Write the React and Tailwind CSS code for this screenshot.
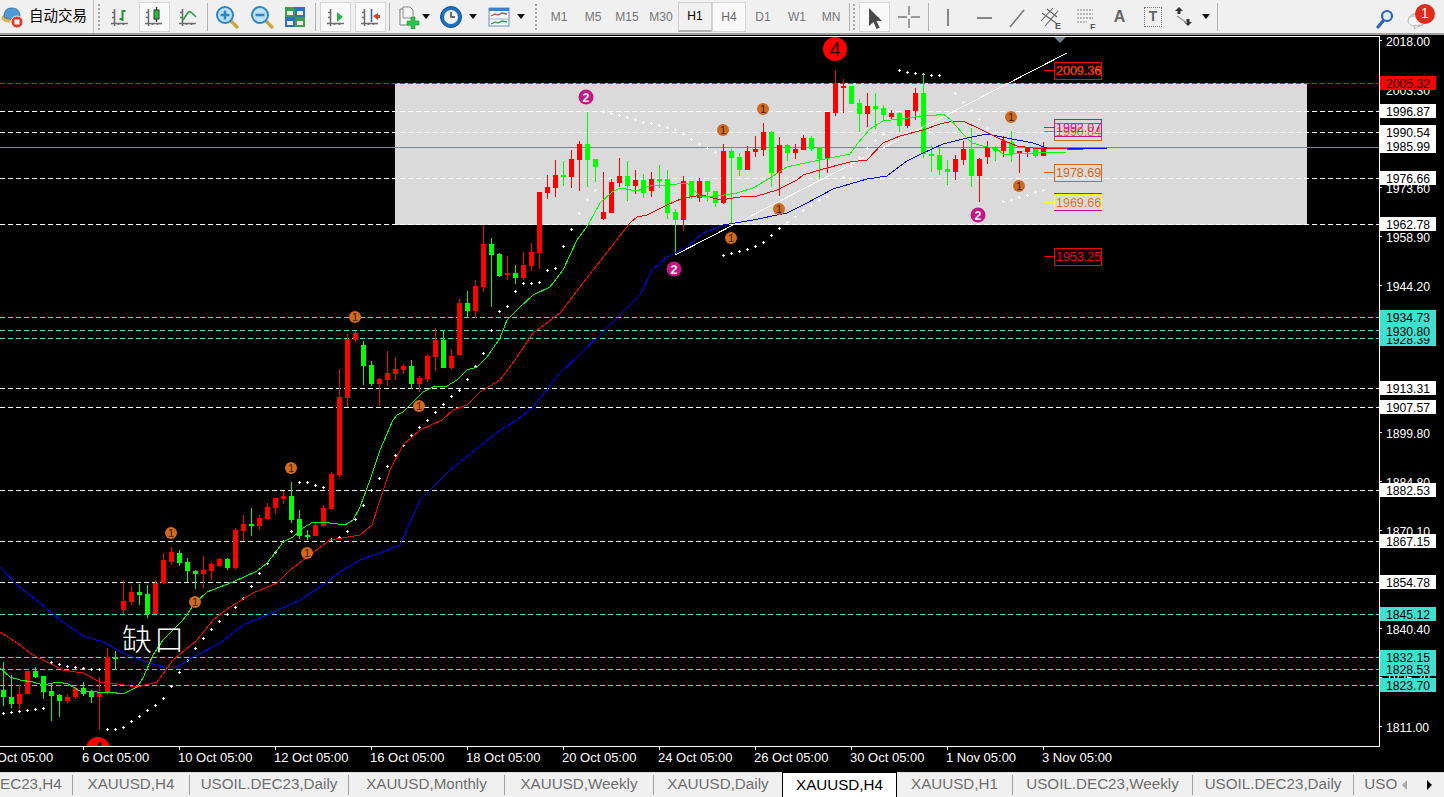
const CANDLES = [
  [662, 690, 697, 706, "g"], [675, 697, 704, 708, "g"], [685, 694, 704, 709, "r"], [671, 671, 694, 694, "r"],
  [667, 671, 677, 678, "g"], [676, 676, 692, 699, "g"], [683, 691, 696, 721, "g"], [694, 695, 701, 717, "g"],
  [694, 697, 701, 703, "r"], [687, 688, 697, 699, "r"], [682, 688, 694, 696, "g"], [690, 692, 697, 703, "g"],
  [677, 693, 697, 730, "r"], [648, 657, 693, 695, "r"], [651, 657, 659, 670, "g"], [580, 601, 610, 614, "r"],
  [586, 592, 602, 605, "r"], [584, 592, 595, 605, "g"], [585, 594, 614, 618, "g"], [580, 583, 614, 614, "r"],
  [553, 560, 583, 584, "r"], [547, 552, 562, 565, "r"], [550, 553, 563, 566, "g"], [558, 562, 571, 582, "g"],
  [570, 571, 574, 589, "g"], [556, 570, 574, 588, "r"], [562, 564, 571, 580, "r"], [558, 559, 566, 567, "r"],
  [558, 559, 568, 570, "g"], [528, 530, 568, 570, "r"], [515, 524, 531, 541, "r"], [508, 524, 526, 536, "g"],
  [515, 518, 526, 530, "r"], [503, 507, 519, 520, "r"], [498, 498, 508, 514, "r"], [491, 496, 499, 504, "r"],
  [482, 496, 520, 523, "g"], [510, 519, 536, 539, "g"], [530, 535, 537, 540, "g"], [522, 525, 536, 536, "r"],
  [505, 508, 526, 527, "r"], [472, 474, 509, 510, "r"], [369, 397, 475, 477, "r"], [334, 339, 398, 407, "r"],
  [331, 333, 340, 342, "r"], [341, 345, 366, 385, "g"], [361, 365, 384, 386, "g"], [378, 379, 384, 406, "r"],
  [351, 373, 380, 386, "r"], [357, 369, 374, 380, "r"], [364, 366, 370, 374, "r"], [360, 366, 384, 389, "g"],
  [376, 378, 384, 392, "r"], [354, 356, 379, 382, "r"], [328, 340, 357, 371, "r"], [330, 340, 368, 368, "g"],
  [349, 356, 368, 370, "r"], [299, 303, 355, 356, "r"], [291, 303, 311, 318, "g"], [280, 286, 311, 318, "r"],
  [225, 244, 287, 292, "r"], [238, 244, 255, 307, "g"], [253, 254, 276, 277, "g"], [256, 273, 275, 280, "r"],
  [265, 273, 278, 284, "g"], [252, 265, 278, 280, "r"], [243, 252, 266, 271, "r"], [192, 192, 253, 269, "r"],
  [175, 187, 193, 199, "r"], [160, 175, 188, 197, "r"], [161, 175, 177, 186, "g"], [150, 159, 177, 188, "r"],
  [141, 144, 160, 191, "r"], [112, 144, 160, 187, "g"], [159, 159, 167, 182, "g"], [172, 212, 219, 220, "r"],
  [179, 182, 213, 213, "r"], [158, 176, 183, 187, "r"], [161, 176, 186, 201, "g"], [170, 180, 186, 194, "r"],
  [174, 180, 193, 198, "g"], [172, 179, 191, 197, "r"], [165, 179, 180, 188, "g"], [170, 179, 213, 219, "g"],
  [209, 212, 220, 255, "g"], [176, 181, 220, 231, "r"], [181, 181, 197, 199, "g"], [178, 181, 198, 202, "r"],
  [181, 181, 192, 201, "g"], [191, 191, 203, 207, "g"], [144, 151, 203, 204, "r"], [149, 151, 158, 224, "g"],
  [153, 157, 170, 176, "g"], [146, 151, 170, 170, "r"], [136, 149, 152, 157, "r"], [123, 132, 150, 156, "r"],
  [131, 132, 173, 187, "g"], [137, 145, 173, 196, "r"], [144, 145, 153, 161, "g"], [144, 149, 153, 159, "r"],
  [135, 138, 150, 150, "r"], [136, 138, 149, 151, "g"], [147, 147, 159, 179, "g"], [112, 112, 159, 173, "r"],
  [70, 83, 113, 116, "r"], [79, 86, 87, 113, "r"], [86, 86, 104, 104, "g"], [99, 103, 114, 132, "g"],
  [93, 106, 114, 127, "r"], [93, 106, 109, 129, "g"], [105, 108, 115, 120, "g"], [110, 113, 117, 120, "r"],
  [112, 113, 126, 132, "g"], [110, 110, 126, 128, "r"], [88, 93, 111, 120, "r"], [74, 93, 154, 158, "g"],
  [145, 154, 156, 172, "g"], [148, 155, 170, 175, "g"], [160, 169, 172, 185, "g"], [155, 159, 172, 180, "r"],
  [141, 149, 160, 165, "r"], [128, 149, 176, 187, "g"], [158, 159, 176, 202, "r"], [141, 147, 157, 164, "r"],
  [146, 148, 151, 161, "g"], [136, 141, 151, 157, "r"], [131, 142, 154, 162, "g"], [151, 151, 154, 173, "r"],
  [148, 148, 152, 157, "r"], [148, 149, 156, 158, "g"], [142, 148, 156, 156, "r"],
];

const GREEN_MA = "0,668 10,677 20,680 33,682 43,685 58,682 68,684 80,691 97,692 110,692 123,694 137,687 143,678 153,655 163,640 183,620 195,603 207,592 220,587 233,582 257,571 267,563 275,553 283,542 293,537 303,528 313,522 330,523 345,525 353,520 360,507 370,480 380,450 393,420 397,415 403,412 413,402 423,392 433,387 447,386 457,380 467,370 477,367 487,357 500,338 507,320 520,307 533,295 550,287 563,270 577,240 588,225 600,203 612,192 620,188 637,191 650,186 667,185 687,183 700,196 717,196 737,193 753,188 770,178 787,167 800,164 820,160 850,154 858,143 870,129 883,121 900,119 923,116 937,115 943,114 950,119 963,134 972,143 983,146 997,149 1003,154 1013,154 1033,153 1067,152";
const RED_MA = "0,632 17,643 33,655 63,670 83,673 100,682 117,684 137,687 157,682 173,660 197,640 213,620 227,609 253,593 277,583 290,570 307,557 330,540 360,535 372,525 380,500 390,470 403,445 420,430 442,420 453,410 467,405 480,392 500,380 517,357 533,333 560,313 593,270 630,223 637,217 647,215 667,205 683,198 703,195 720,200 740,197 757,196 777,190 797,180 803,175 823,169 850,162 867,160 883,143 900,136 923,130 940,124 953,121 963,121 980,129 1000,139 1017,146 1033,148 1067,149 1083,150";
const BLUE_MA = "0,567 17,585 40,603 60,620 83,636 103,642 127,655 150,663 167,668 177,667 193,657 220,643 243,625 267,615 300,600 327,582 343,570 360,560 380,553 400,545 420,500 450,470 500,430 517,420 533,407 560,373 600,335 640,295 652,270 667,257 687,247 703,233 723,225 753,220 787,213 803,205 820,196 833,189 867,179 887,176 907,161 923,153 943,144 967,138 987,134 1007,138 1033,143 1047,148 1083,148 1107,149";

const SAR = [
  [3, 713], [11, 712], [19, 711], [27, 710], [35, 709], [43, 708], [51, 662], [59, 664], [67, 666], [75, 667], [83, 668], [91, 669], [99, 669],
  [107, 729], [115, 729], [123, 727], [131, 721], [139, 716], [147, 710], [155, 705], [163, 698], [171, 686], [179, 672], [187, 660], [195, 648],
  [203, 638], [211, 629], [219, 621], [227, 614], [235, 607], [243, 598], [251, 586], [259, 573], [267, 563], [275, 552], [283, 541], [291, 531],
  [299, 482], [307, 482], [315, 485], [323, 487], [331, 539], [339, 537], [347, 531], [355, 519], [363, 505], [371, 490], [379, 478], [387, 466],
  [395, 455], [403, 445], [411, 435], [419, 427], [427, 420], [435, 412], [443, 404], [451, 396], [459, 390], [467, 379], [475, 366], [483, 353],
  [491, 330], [499, 311], [507, 306], [515, 291], [523, 283], [531, 283], [539, 282], [547, 270], [555, 268], [563, 246], [571, 229], [579, 213],
  [587, 199], [595, 190], [603, 111], [611, 113], [619, 115], [627, 117], [635, 119], [643, 122], [651, 123], [659, 125], [667, 127], [675, 129],
  [683, 134], [691, 139], [699, 144], [707, 148], [715, 152], [723, 255], [731, 253], [739, 251], [747, 249], [755, 246], [763, 242], [771, 235],
  [779, 228], [787, 222], [795, 216], [803, 210], [811, 205], [819, 200], [827, 196], [835, 189], [843, 177], [851, 166], [859, 157], [867, 148],
  [875, 140], [883, 134], [899, 70], [907, 72], [915, 73], [923, 74], [931, 75], [939, 75], [955, 93], [963, 102], [971, 110], [979, 119],
  [987, 128], [995, 137], [1003, 201], [1011, 200], [1019, 197], [1027, 195], [1035, 192], [1043, 190],
];

const WHITE_LEVELS = [111, 132, 178, 224, 388, 407, 490, 541, 582];
const AQUA_LEVELS = [317, 330, 338, 614, 657, 669, 685];

const ORANGE_MARKS = [[171, 533], [291, 468], [195, 602], [307, 553], [355, 317], [419, 406], [723, 130], [763, 109], [731, 238], [779, 209], [1011, 117], [1019, 186]];
const PINK_MARKS = [[586, 97], [674, 269], [978, 215]];

const SCALE = [
  ["2018.00", 41], ["2003.30", 90], ["1973.60", 188], ["1958.90", 237], ["1944.20", 286], ["1914.50", 385],
  ["1899.80", 433], ["1884.80", 482], ["1870.10", 531], ["1855.40", 580], ["1840.40", 629], ["1825.70", 678], ["1811.00", 727],
];

// drawn in this order, later ones cover earlier ones
const TAGS = [
  ["2005.32", 77, "bg-[#ff0000]"], ["1996.87", 105, "bg-white"], ["1990.54", 126, "bg-white"], ["1985.99", 140, "bg-white"],
  ["1976.66", 172, "bg-white"], ["1962.78", 218, "bg-white"], ["1928.39", 333, "bg-[#40e0d0]"], ["1930.80", 325, "bg-[#40e0d0]"],
  ["1934.73", 311, "bg-[#40e0d0]"], ["1913.31", 382, "bg-white"], ["1907.57", 401, "bg-white"], ["1882.53", 484, "bg-white"],
  ["1867.15", 535, "bg-white"], ["1854.78", 576, "bg-white"], ["1845.12", 608, "bg-[#40e0d0]"], ["1828.53", 663, "bg-[#40e0d0]"],
  ["1832.15", 651, "bg-[#40e0d0]"], ["1823.70", 679, "bg-[#40e0d0]"],
];

const TIMES = ["5 Oct 05:00", "6 Oct 05:00", "10 Oct 05:00", "12 Oct 05:00", "16 Oct 05:00", "18 Oct 05:00", "20 Oct 05:00", "24 Oct 05:00", "26 Oct 05:00", "30 Oct 05:00", "1 Nov 05:00", "3 Nov 05:00"];

const TABS = [
  ["USOIL.DEC23,H4", "w-[144px]"],
  ["XAUUSD,H4", "w-[117px]"],
  ["USOIL.DEC23,Daily", "w-[159px]"],
  ["XAUUSD,Monthly", "w-[156px]"],
  ["XAUUSD,Weekly", "w-[149px]"],
  ["XAUUSD,Daily", "w-[128px]"],
  ["XAUUSD,H4", "w-[115px]"],
  ["XAUUSD,H1", "w-[116px]"],
  ["USOIL.DEC23,Weekly", "w-[180px]"],
  ["USOIL.DEC23,Daily", "w-[161px]"],
  ["USOIL.DEC23,H1", "w-[144px]"],
];

const PERIODS = ["M1", "M5", "M15", "M30", "H1", "H4", "D1", "W1", "MN"];

function Axes() {
  return <path d="M6.5 4v17M3 18.5h17M4 7.5h2M4 12.5h2M10.5 18v2M15.5 18v2" stroke="#6e6e6e" strokeWidth="1.6" fill="none" />;
}

function Icon({ children, w = 24, h = 24 }) {
  return (
    <svg width={w} height={h} viewBox={`0 0 ${w} ${h}`} className="block shrink-0">
      {children}
    </svg>
  );
}

function Caret() {
  return (
    <svg width="8" height="5" viewBox="0 0 8 5" className="block shrink-0">
      <path d="M0 0h8L4 5z" fill="#111" />
    </svg>
  );
}

function Lens({ minus }) {
  return (
    <Icon>
      <path d="M15 15l7 7" stroke="#c9a93f" strokeWidth="3.4" strokeLinecap="round" />
      <circle cx="10" cy="10" r="8" fill="#bfe3f6" stroke="#2f86c5" strokeWidth="2" />
      <path d={minus ? "M5.5 10h9" : "M5.5 10h9M10 5.5v9"} stroke="#2f86c5" strokeWidth="2.6" />
    </Icon>
  );
}

function Cell({ w, frame, children, className }) {
  return (
    <div className={`${w} h-[30px] flex items-center justify-center shrink-0 ${className || ""}`}>
      {frame ? (
        <div className="w-[31px] h-[30px] border border-[#d6d6d6] bg-[#f9f9f9] flex items-center justify-center">{children}</div>
      ) : (
        children
      )}
    </div>
  );
}

function Divider({ w }) {
  return (
    <div className={`${w} h-[28px] flex justify-center shrink-0`}>
      <div className="w-px h-full bg-[#b4b4b4]" />
    </div>
  );
}

function Gripper({ w }) {
  return (
    <div className={`${w} h-[26px] flex justify-center shrink-0`}>
      <div className="w-[2px] h-full border-l-2 border-dotted border-[#a8a8a8]" />
    </div>
  );
}

function Toolbar() {
  return (
    <div className="h-[33px] shrink-0 bg-[#f0f0f0] flex items-center">
      <div className="w-[94px] shrink-0 flex items-center border-r border-[#c4c4c4] h-[33px]">
        <svg width="24" height="24" viewBox="0 0 24 24" className="block ml-px shrink-0">
          <ellipse cx="10" cy="13" rx="9.5" ry="5" fill="#e0b458" />
          <path d="M3 12C3 5 6 3 11 3s8 3 8 9c-4 3-12 3-16 0z" fill="#4f9ad4" stroke="#2f6f9f" strokeWidth="0.8" />
          <circle cx="16" cy="17" r="6" fill="#e23a2c" stroke="#fff" strokeWidth="0.8" />
          <rect x="13.5" y="14.5" width="5" height="5" fill="#fff" />
        </svg>
        <span className="ml-[4px] text-[14.5px] text-black whitespace-nowrap">自动交易</span>
      </div>
      <Gripper w="w-[9px]" />
      <Cell w="w-[34px]">
        <Icon>
          <Axes />
          <path d="M14.5 5v11M14.5 6h3M14.5 14h-3" stroke="#1a9a2a" strokeWidth="2" fill="none" />
        </Icon>
      </Cell>
      <Cell w="w-[34px]" frame>
        <Icon>
          <Axes />
          <path d="M14.5 2v15" stroke="#333" strokeWidth="1.4" />
          <rect x="12" y="5" width="5" height="9" fill="#25c03a" stroke="#333" />
        </Icon>
      </Cell>
      <Cell w="w-[34px]">
        <Icon>
          <Axes />
          <path d="M7 15l4-6c2-3 3-3 5-1l4 4" stroke="#2f9a4a" strokeWidth="1.6" fill="none" />
        </Icon>
      </Cell>
      <Divider w="w-[4px]" />
      <Cell w="w-[36px]"><Lens /></Cell>
      <Cell w="w-[33px]"><Lens minus /></Cell>
      <Cell w="w-[34px]">
        <Icon>
          <rect x="2" y="2" width="10" height="10" fill="#3f9f4f" />
          <rect x="12" y="2" width="10" height="10" fill="#2d6fc4" />
          <rect x="2" y="12" width="10" height="10" fill="#2d6fc4" />
          <rect x="12" y="12" width="10" height="10" fill="#3f9f4f" />
          <path d="M4 6h6v4H4zM14 6h6v4h-6zM4 16h6v4H4zM14 16h6v4h-6z" fill="#e6f2e8" />
        </Icon>
      </Cell>
      <Divider w="w-[6px]" />
      <Cell w="w-[35px]" frame>
        <Icon>
          <Axes />
          <path d="M13 7l6 5-6 5z" fill="#2fb14a" />
        </Icon>
      </Cell>
      <Cell w="w-[34px]" frame>
        <Icon>
          <Axes />
          <path d="M13.5 4v13" stroke="#3a5f9a" strokeWidth="1.6" />
          <path d="M15 11l5-3v2h2v3h-2v2z" fill="#d9402a" />
        </Icon>
      </Cell>
      <Divider w="w-[4px]" />
      <Cell w="w-[43px]" className="gap-[2px]">
        <Icon>
          <path d="M4 4h9l3 3v13H4z" fill="#fff" stroke="#777" />
          <path d="M7 2h7l3 3v8H7z" fill="#f4f4f4" stroke="#888" />
          <path d="M15 12h4v4h4v4h-4v4h-4v-4h-4v-4h4z" fill="#2fc14a" stroke="#1d9a35" strokeWidth="0.6" />
        </Icon>
        <Caret />
      </Cell>
      <Cell w="w-[48px]" className="gap-[6px]">
        <Icon>
          <circle cx="12" cy="12" r="10.5" fill="#1f6fc2" stroke="#134d8a" />
          <circle cx="12" cy="12" r="7" fill="#f1f1ec" />
          <path d="M12 7v5h4" stroke="#444" strokeWidth="1.5" fill="none" />
        </Icon>
        <Caret />
      </Cell>
      <Cell w="w-[48px]" className="gap-[6px]">
        <Icon>
          <rect x="2" y="3" width="20" height="18" fill="#f5f7fa" stroke="#6f8fb5" />
          <rect x="2" y="3" width="20" height="3" fill="#3f7fc2" />
          <path d="M2 14h20" stroke="#9fb5cc" />
          <path d="M4 11l4-2 3 1 4-2 5 1" stroke="#d0452a" strokeWidth="1.3" fill="none" />
          <path d="M4 19l4-2 3 1 4-2 5 1" stroke="#2f9a4a" strokeWidth="1.3" fill="none" />
        </Icon>
        <Caret />
      </Cell>
      <Gripper w="w-[12px]" />
      {PERIODS.map((p) => (
        <div
          key={p}
          className={`w-[34px] h-[30px] shrink-0 flex items-center justify-center text-[12px] ${
            p === "H1"
              ? "text-black bg-[#f0f0f0] border border-b-2 border-[#d0d0d0] border-b-[#b0b0b0]"
              : p === "H4"
                ? "text-[#666] bg-[#f9f9f9] border border-[#d6d6d6]"
                : "text-[#777]"
          }`}
        >
          {p}
        </div>
      ))}
      <Divider w="w-[2px]" />
      <Gripper w="w-[8px]" />
      <Cell w="w-[33px]" frame>
        <Icon>
          <path d="M6 3l0 18 4.5-4 3 7 3-1.2-3-6.8H19z" fill="#4a4a4a" />
        </Icon>
      </Cell>
      <Cell w="w-[35px]">
        <Icon>
          <path d="M12 1v9M12 14v9M1 12h9M14 12h9" stroke="#7a7a7a" strokeWidth="1.4" />
        </Icon>
      </Cell>
      <Divider w="w-[4px]" />
      <Cell w="w-[36px]">
        <Icon><path d="M12 4v17" stroke="#7a7a7a" strokeWidth="1.8" /></Icon>
      </Cell>
      <Cell w="w-[35px]">
        <Icon><path d="M5 13h15" stroke="#7a7a7a" strokeWidth="1.8" /></Icon>
      </Cell>
      <Cell w="w-[32px]">
        <Icon><path d="M5 22L19 5" stroke="#7a7a7a" strokeWidth="1.6" /></Icon>
      </Cell>
      <Cell w="w-[35px]">
        <Icon>
          <path d="M2 16L14 3M6 21L19 6M3 8l14 10M8 4l10 8" stroke="#666" strokeWidth="1.1" fill="none" />
          <text x="16" y="24" fontSize="9" fontWeight="700" fill="#555">E</text>
        </Icon>
      </Cell>
      <Cell w="w-[35px]">
        <Icon>
          <path d="M3 5h16M3 9h16M3 13h16M3 17h10" stroke="#7a7a7a" strokeDasharray="2 1" />
          <text x="16" y="25" fontSize="9" fontWeight="700" fill="#555">F</text>
        </Icon>
      </Cell>
      <Cell w="w-[33px]"><span className="text-[16px] font-bold text-[#666]">A</span></Cell>
      <Cell w="w-[34px]">
        <div className="w-[18px] h-[20px] border border-dotted border-[#777] flex items-center justify-center text-[14px] font-bold text-[#666]">T</div>
      </Cell>
      <Cell w="w-[46px]" className="gap-[6px] pr-[4px]">
        <Icon>
          <path d="M7 2l4 4H8.5v3h-3V6H3z" fill="#333" />
          <path d="M16 21l4-4h-2.5v-3h-3v3H12z" fill="#333" />
          <path d="M5 11l10 7" stroke="#999" strokeWidth="1.4" />
        </Icon>
        <Caret />
      </Cell>
      <Divider w="w-[2px]" />
      <div className="flex-1" />
      <Cell w="w-[30px]">
        <Icon>
          <path d="M12 16l-5 6" stroke="#2a62b8" strokeWidth="3.2" strokeLinecap="round" />
          <circle cx="16" cy="11" r="5" fill="#e4f0fb" stroke="#2a62b8" strokeWidth="2.2" />
        </Icon>
      </Cell>
      <Cell w="w-[46px]">
        <div className="relative w-[30px] h-[30px]">
          <svg width="30" height="30" viewBox="0 0 30 30" className="block">
            <ellipse cx="11" cy="18" rx="8.5" ry="6.5" fill="#e4e4e4" stroke="#a8a8a8" />
            <ellipse cx="9" cy="19" rx="7" ry="5" fill="#f8f8f8" stroke="#bcbcbc" />
            <path d="M9 23l-1 4 5-3z" fill="#f0f0f0" stroke="#b0b0b0" strokeWidth="0.7" />
          </svg>
          <div className="absolute right-[1px] top-[2px] w-[20px] h-[20px] rounded-full bg-[#e02a1a] text-white text-[14px] flex items-center justify-center">1</div>
        </div>
      </Cell>
    </div>
  );
}

function Box({ y, h = 17, color, line }) {
  return (
    <g fill="none" stroke={color} shapeRendering="crispEdges">
      <rect x="1054.5" y={y + 0.5} width="47" height={h} />
      {line && <path d={`M1044 ${line + 0.5}h10`} />}
    </g>
  );
}

function BoxText({ y, color, children }) {
  return (
    <text x="1056" y={y} fontSize="12.5" fill={color}>
      {children}
    </text>
  );
}

function Chart() {
  return (
    <svg width="1379" height="709" viewBox="0 37 1379 709" className="block">
      <rect x="395" y="83" width="912" height="142" fill="#dadada" />

      {WHITE_LEVELS.map((y) => (
        <path key={y} d={`M0 ${y + 0.5}H1379`} stroke="#fff" strokeDasharray="5 3" shapeRendering="crispEdges" />
      ))}
      {AQUA_LEVELS.map((y) => (
        <path key={y} d={`M0 ${y + 0.5}H1379`} stroke="#40e0d0" strokeDasharray="5 3" shapeRendering="crispEdges" />
      ))}
      <path d="M0 83.5H1379" stroke="#e0201a" strokeDasharray="5 3" shapeRendering="crispEdges" />
      <path d="M0 147.5H1379" stroke="#778899" shapeRendering="crispEdges" />

      {SAR.map(([x, y]) => (
        <path key={x} d={`M${x - 1} ${y + 0.5}h3M${x + 0.5} ${y - 1}v3`} stroke="#fff" shapeRendering="crispEdges" />
      ))}

      <g shapeRendering="crispEdges">
        {CANDLES.map(([high, top, bottom, low, dir], i) => {
          const x = 3 + 8 * i;
          const fill = dir === "g" ? "#00ff00" : "#ff0000";
          return (
            <g key={i} fill={fill}>
              <rect x={x} y={high} width="1" height={low - high} />
              <rect x={x - 2} y={top} width="5" height={Math.max(bottom - top, 2)} />
            </g>
          );
        })}
      </g>

      <g fill="none" shapeRendering="crispEdges">
        <polyline points="675,255 1067,53" stroke="#fff" />
        <polyline points={BLUE_MA} stroke="#0000ff" />
        <polyline points={RED_MA} stroke="#ff0000" />
        <polyline points={GREEN_MA} stroke="#00ff00" />
      </g>

      <path d="M1054 37h12l-6 6z" fill="#708090" />

      {ORANGE_MARKS.map(([x, y]) => (
        <g key={x}>
          <circle cx={x} cy={y} r="6" fill="#d2691e" />
          <text x={x} y={y + 4} fontSize="11" textAnchor="middle" fill="#3a2410">1</text>
        </g>
      ))}
      {PINK_MARKS.map(([x, y]) => (
        <g key={x}>
          <circle cx={x} cy={y} r="7.5" fill="#c71585" />
          <text x={x} y={y + 4.5} fontSize="12.5" fontWeight="700" textAnchor="middle" fill="#f0f0f0">2</text>
        </g>
      ))}
      <circle cx="835" cy="49" r="12" fill="#ff0000" />
      <text x="835" y="56" fontSize="20" textAnchor="middle" fill="#111">4</text>
      <circle cx="98" cy="749" r="12" fill="#ff0000" />
      <text x="98" y="756" fontSize="20" textAnchor="middle" fill="#111">4</text>

      <text x="122" y="650" fontSize="30" fontWeight="300" fill="#fff" letterSpacing="2">缺口</text>

      <Box y={62} color="#ff0000" line={70} />
      <BoxText y={75} color="#e8d000">2009.36</BoxText>
      <BoxText y={75} color="#ff0000">2009.38</BoxText>
      <Box y={123} color="#d2691e" line={131} />
      <Box y={119} color="#c71585" line={127} />
      <BoxText y={136} color="#d2691e">1990.84</BoxText>
      <BoxText y={132} color="#c71585">1992.07</BoxText>
      <Box y={164} color="#d2691e" line={172} />
      <BoxText y={177} color="#d2691e">1978.69</BoxText>
      <Box y={193} color="#c71585" line={202} />
      <Box y={194} h={15} color="#ffff00" line={202} />
      <BoxText y={207} color="#ffff00">1969.66</BoxText>
      <BoxText y={207} color="#c71585aa">1969.66</BoxText>
      <Box y={248} color="#ff0000" line={256} />
      <BoxText y={261} color="#ff0000">1953.25</BoxText>
    </svg>
  );
}

function PriceAxis() {
  return (
    <div className="relative w-[64px] h-[709px] text-[12.2px] leading-[16px]">
      {SCALE.map(([label, y]) => (
        <div key={label}>
          <div className="absolute left-0 w-[2px] h-px bg-white" style={{ top: y - 37 }} />
          <div className="absolute left-[6px] text-white" style={{ top: y - 43 }}>{label}</div>
        </div>
      ))}
      {TAGS.map(([label, y, bg]) => (
        <div key={label} className={`absolute left-0 w-[56px] h-[14px] pl-[6px] text-black ${bg}`} style={{ top: y - 37 }}>
          {label}
        </div>
      ))}
    </div>
  );
}

function TimeAxis() {
  return (
    <div className="h-[25px] overflow-hidden flex ml-[-13px] text-[13px] leading-[14px] text-white">
      {TIMES.map((t) => (
        <div key={t} className="w-[96px] shrink-0">
          <div className="w-px h-[3px] bg-white" />
          <div className="mt-[1px] -ml-px whitespace-nowrap">{t}</div>
        </div>
      ))}
    </div>
  );
}

function TabStrip() {
  return (
    <div className="relative flex-1 overflow-hidden bg-[#f0f0f0] shadow-[inset_0_1px_0_#dcdcdc]">
      <div className="flex ml-[-71px] h-full items-center">
        {TABS.map(([tab, w], i) => (
          <div
            key={i}
            className={`${w} flex items-center justify-center shrink-0 whitespace-nowrap text-[15.2px] ${
              i === 6
                ? "h-full bg-white text-black border-x border-t border-black"
                : `h-[20px] text-[#6e6e6e] ${i === 5 ? "" : "border-r border-[#a0a0a0]"}`
            }`}
          >
            {tab}
          </div>
        ))}
      </div>
      <div className="absolute right-0 top-[1px] bottom-0 w-[47px] bg-[#f0f0f0] flex items-center pl-[5px] gap-[20px]">
        <span className="w-0 h-0 border-y-[5px] border-y-transparent border-r-[5px] border-r-[#a8a8a8]" />
        <span className="w-0 h-0 border-y-[5px] border-y-transparent border-l-[5px] border-l-black" />
      </div>
    </div>
  );
}

export default function App() {
  return (
    <div className="w-[1444px] h-[797px] overflow-hidden flex flex-col bg-black font-[family-name:'Liberation_Sans','Noto_Sans_CJK_SC',sans-serif]">
      <Toolbar />
      <div className="h-[2px] shrink-0 bg-[#a0a0a0]" />
      <div className="h-px shrink-0" />
      <div className="flex shrink-0">
        <div className="w-[1380px] shrink-0 border-y border-r border-white">
          <Chart />
        </div>
        <PriceAxis />
      </div>
      <TimeAxis />
      <TabStrip />
    </div>
  );
}
